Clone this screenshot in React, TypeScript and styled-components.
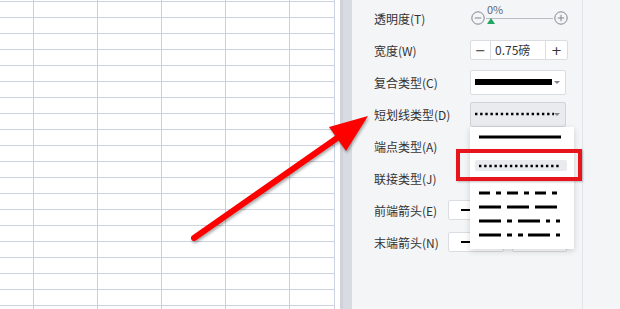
import React from 'react';
import styled, {createGlobalStyle} from "styled-components";

const GlobalStyle = createGlobalStyle`
    html, body {
        margin: 0;
        padding: 0;
        width: 620px;
        height: 309px;
        overflow: hidden;
        background: #ffffff;
    }
`

const font = `"Noto Sans CJK SC", "Noto Sans", sans-serif`;

type Pattern = 'thick' | 'solid' | 'dots' | 'dashDot' | 'dash' | 'longDashDot' | 'longDashDotDot';

const dashes: Record<Pattern, string | undefined> = {
    thick: undefined,
    solid: undefined,
    dots: '2.4 2.75',
    dashDot: '11 6 5 6',
    dash: '22 6',
    longDashDot: '22 6 5 6 22 6 4 6 4 10',
    longDashDotDot: '22 6 5 6 5 5 22 6 4 10',
};

const LineSample = ({pattern, width}: { pattern: Pattern; width: number }) => {
    const h = pattern === 'thick' ? 6 : pattern === 'dots' ? 2.5 : 3;
    return (
        <svg width={width} height={8} viewBox={`0 0 ${width} 8`} style={{display: 'block'}}>
            <line x1={0} y1={4} x2={width} y2={4} stroke="#000" strokeWidth={h}
                  strokeDasharray={dashes[pattern]}/>
        </svg>
    );
};

const CircleIcon = ({plus}: { plus?: boolean }) => (
    <svg width={14} height={14} viewBox="0 0 14 14">
        <circle cx={7} cy={7} r={6.2} fill="none" stroke="#80858e" strokeWidth={1}/>
        <line x1={3.8} y1={7} x2={10.2} y2={7} stroke="#80858e" strokeWidth={1}/>
        {plus && <line x1={7} y1={3.8} x2={7} y2={10.2} stroke="#80858e" strokeWidth={1}/>}
    </svg>
);

const App = () => {
    return (
        <Screen>
            <GlobalStyle/>
            <Sheet/>
            <Splitter/>
            <Panel>
                <Row>
                    <Label>透明度(T)</Label>
                    <Slider>
                        <CircleIcon/>
                        <Track>
                            <Percent>0%</Percent>
                            <Thumb/>
                        </Track>
                        <CircleIcon plus/>
                    </Slider>
                </Row>
                <Row>
                    <Label>宽度(W)</Label>
                    <Stepper>
                        <StepButton>−</StepButton>
                        <StepValue>0.75磅</StepValue>
                        <StepButton $right>+</StepButton>
                    </Stepper>
                </Row>
                <Row>
                    <Label>复合类型(C)</Label>
                    <Select>
                        <LineSample pattern="thick" width={77}/>
                        <Caret/>
                    </Select>
                </Row>
                <Row>
                    <Label>短划线类型(D)</Label>
                    <Select $active>
                        <LineSample pattern="dots" width={79}/>
                        <Caret/>
                    </Select>
                </Row>
                <Row>
                    <Label>端点类型(A)</Label>
                </Row>
                <Row>
                    <Label>联接类型(J)</Label>
                </Row>
                <Row>
                    <Label $w={74}>前端箭头(E)</Label>
                    <ArrowPair>
                        <ArrowBox $w={56}><ShortDash/></ArrowBox>
                        <ArrowBox $w={55}/>
                    </ArrowPair>
                </Row>
                <Row>
                    <Label $w={74}>末端箭头(N)</Label>
                    <ArrowPair>
                        <ArrowBox $w={56}><ShortDash/></ArrowBox>
                        <ArrowBox $w={55}/>
                    </ArrowPair>
                </Row>

                <Menu>
                    <MenuItem $h={20}><LineSample pattern="solid" width={82}/></MenuItem>
                    <MenuItem $h={11} $top={13} $selected><LineSample pattern="dots" width={82}/></MenuItem>
                    <MenuItem $h={14} $top={15}><LineSample pattern="dashDot" width={82}/></MenuItem>
                    <MenuItem $h={14}><LineSample pattern="dash" width={82}/></MenuItem>
                    <MenuItem $h={14}><LineSample pattern="longDashDot" width={82}/></MenuItem>
                    <MenuItem $h={14}><LineSample pattern="longDashDotDot" width={82}/></MenuItem>
                </Menu>
            </Panel>
            <Side/>

            <Callout/>
            <Pointer width={620} height={309} viewBox="0 0 620 309">
                <line x1={194} y1={238} x2={340} y2={136} stroke="#ff0000" strokeWidth={6} strokeLinecap="round"/>
                <polygon points="368,116 329,127 346,151" fill="#ff0000"/>
            </Pointer>
        </Screen>
    );
};

export default App;

const Screen = styled.div`
    position: relative;
    display: flex;
    width: 620px;
    height: 309px;
    overflow: hidden;
    font-family: ${font};
`

const Sheet = styled.div`
    width: 338px;
    flex-shrink: 0;
    background-color: #ffffff;
    background-image: linear-gradient(to right, #c9cfdd 1px, transparent 1px),
    linear-gradient(to bottom, #ccd2df 1px, transparent 1px);
    background-size: 64px 100%, 100% 16px;
    background-position: 33px 0, 0 1px;
    border-right: 2px solid #ffffff;
    box-shadow: inset -3px 0 0 #ffffff, inset -4px 0 0 #ccd2df;
`

const Splitter = styled.div`
    width: 12px;
    flex-shrink: 0;
    background: #d8dbe2;
    border-left: 3px solid #cfd2da;
    box-sizing: border-box;
`

const Panel = styled.div`
    position: relative;
    width: 231px;
    flex-shrink: 0;
    padding: 2px 0 0 22px;
    box-sizing: border-box;
    background: #f4f5f7;
    border-right: 1px solid #e2e4e8;
`

const Side = styled.div`
    flex: 1;
    background: #f4f5f7;
`

const Row = styled.div`
    display: flex;
    align-items: center;
    height: 32px;
`

const Label = styled.div<{ $w?: number }>`
    width: ${p => p.$w ?? 96}px;
    flex-shrink: 0;
    font-size: 12px;
    color: #333333;
    white-space: nowrap;
`

const Slider = styled.div`
    display: flex;
    align-items: center;
    gap: 1px;
    margin-left: 1px;
`

const Track = styled.div`
    position: relative;
    width: 67px;
    height: 1px;
    background: #b9bdc4;
`

const Percent = styled.span`
    position: absolute;
    left: 1px;
    top: -15px;
    font-size: 11px;
    color: #666a70;
    line-height: 12px;
`

const Thumb = styled.span`
    position: absolute;
    left: 1px;
    top: 0;
    width: 0;
    height: 0;
    border-left: 4px solid transparent;
    border-right: 4px solid transparent;
    border-bottom: 6px solid #1fa85f;
`

const Stepper = styled.div`
    display: flex;
    width: 98px;
    height: 20px;
    box-sizing: border-box;
    border: 1px solid #d9dce1;
    border-radius: 2px;
    background: #ffffff;
`

const StepButton = styled.div<{ $right?: boolean }>`
    width: ${p => p.$right ? 21 : 19}px;
    display: flex;
    align-items: center;
    justify-content: center;
    font-family: "DejaVu Sans", sans-serif;
    font-size: 13px;
    color: #333333;
    ${p => p.$right ? 'border-left: 1px solid #d9dce1;' : 'border-right: 1px solid #d9dce1;'}
`

const StepValue = styled.div`
    flex: 1;
    padding-left: 4px;
    font-size: 12px;
    line-height: 18px;
    color: #333333;
`

const Select = styled.div<{ $active?: boolean }>`
    display: flex;
    align-items: center;
    justify-content: space-between;
    width: 96px;
    height: 25px;
    padding: 0 5px 0 4px;
    box-sizing: border-box;
    border: 1px solid ${p => p.$active ? '#cfd3d9' : '#d9dce1'};
    border-radius: 2px;
    background: ${p => p.$active ? '#e9ebef' : '#ffffff'};
`

const Caret = styled.span`
    width: 0;
    height: 0;
    border-left: 3px solid transparent;
    border-right: 3px solid transparent;
    border-top: 3px solid #7d828b;
`

const ArrowPair = styled.div`
    display: flex;
    gap: 8px;
`

const ArrowBox = styled.div<{ $w: number }>`
    width: ${p => p.$w}px;
    height: 20px;
    box-sizing: border-box;
    border: 1px solid #d9dce1;
    border-radius: 2px;
    background: #ffffff;
    display: flex;
    align-items: center;
    padding-left: 12px;
`

const ShortDash = styled.span`
    width: 10px;
    height: 2px;
    background: #000000;
`

const Menu = styled.div`
    position: absolute;
    left: 118px;
    top: 127px;
    width: 104px;
    height: 122px;
    box-sizing: border-box;
    background: #ffffff;
    box-shadow: 0 2px 6px rgba(0, 0, 0, 0.16);
    display: flex;
    flex-direction: column;
`

const MenuItem = styled.div<{ $h: number; $top?: number; $selected?: boolean }>`
    height: ${p => p.$h}px;
    margin: ${p => p.$top ?? 0}px 7px 0 5px;
    padding-left: 4px;
    display: flex;
    align-items: center;
    border-radius: 2px;
    background: ${p => p.$selected ? '#e9ebef' : 'transparent'};
`

const Callout = styled.div`
    position: absolute;
    left: 456px;
    top: 149px;
    width: 126px;
    height: 32px;
    box-sizing: border-box;
    border: 4px solid #e8141b;
    box-shadow: 1px 1px 2px rgba(0, 0, 0, 0.25);
`

const Pointer = styled.svg`
    position: absolute;
    left: 0;
    top: 0;
    pointer-events: none;
    filter: drop-shadow(1px 2px 1.5px rgba(0, 0, 0, 0.35));
`
